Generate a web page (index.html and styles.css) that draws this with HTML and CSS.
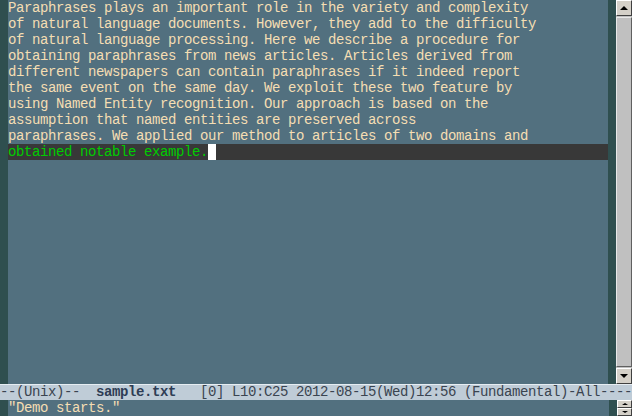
FILE: index.html
```html
<!DOCTYPE html>
<html>
<head>
<meta charset="utf-8">
<link rel="stylesheet" href="styles.css">
</head>
<body>
<div class="frame">
  <div class="window">
    <div class="fringe"></div>
    <div class="text">
<div class="line">Paraphrases plays an important role in the variety and complexity</div>
<div class="line">of natural language documents. However, they add to the difficulty</div>
<div class="line">of natural language processing. Here we describe a procedure for</div>
<div class="line">obtaining paraphrases from news articles. Articles derived from</div>
<div class="line">different newspapers can contain paraphrases if it indeed report</div>
<div class="line">the same event on the same day. We exploit these two feature by</div>
<div class="line">using Named Entity recognition. Our approach is based on the</div>
<div class="line">assumption that named entities are preserved across</div>
<div class="line">paraphrases. We applied our method to articles of two domains and</div>
<div class="line hl"><span class="green">obtained notable example.</span><span class="cursor"> </span></div>
    </div>
    <div class="fringe"></div>
    <div class="scrollbar">
      <div class="sbtn"><span class="tri up"></span></div>
      <div class="thumb"></div>
      <div class="sbtn"><span class="tri down"></span></div>
    </div>
  </div>
  <div class="modeline">--(Unix)--  <b class="buf">sample.txt</b>   [0] L10:C25 2012-08-15(Wed)12:56 (Fundamental)-All----</div>
  <div class="echo">
    <div class="fringe"></div>
    <div class="echotext">"Demo starts."</div>
    <div class="fringe"></div>
    <div class="mini">
      <div class="mbtn"><span class="mtri up"></span></div>
      <div class="mbtn"><span class="mtri down"></span></div>
    </div>
  </div>
</div>
</body>
</html>
```
FILE: styles.css
```css
html, body {
  margin: 0;
  padding: 0;
  background: #52707f;
}
.frame {
  width: 632px;
  height: 416px;
  display: flex;
  flex-direction: column;
  overflow: hidden;
  font-family: "Liberation Mono", "DejaVu Sans Mono", monospace;
  font-size: 14px;
  letter-spacing: -0.4px;
  line-height: 16px;
}
.window {
  height: 384px;
  display: flex;
}
.fringe {
  width: 8px;
  flex: none;
  background: #2f4f4f;
}
.text {
  width: 600px;
  color: #f5deb3;
}
.line {
  height: 16px;
  white-space: pre;
}
.hl {
  background: #383838;
}
.green {
  color: #00cc00;
}
.cursor {
  display: inline-block;
  width: 8px;
  height: 16px;
  background: #ffffff;
  vertical-align: top;
}
.scrollbar {
  width: 16px;
  flex: none;
  display: flex;
  flex-direction: column;
  background: #c0c0c0;
}
.sbtn {
  height: 16px;
  box-sizing: border-box;
  border-top: 1px solid #ffffff;
  border-left: 1px solid #ffffff;
  border-right: 1px solid #404040;
  border-bottom: 1px solid #404040;
  background: #d4d0c8;
  display: flex;
  align-items: center;
  justify-content: center;
}
.thumb {
  flex: 1;
  box-sizing: border-box;
  margin: 1px 0;
  border-top: 1px solid #e8e8e8;
  border-left: 1px solid #e8e8e8;
  border-right: 1px solid #606060;
  border-bottom: 1px solid #606060;
  background: #c0c0c0;
}
.tri {
  width: 0;
  height: 0;
  border-left: 4px solid transparent;
  border-right: 4px solid transparent;
}
.tri.up { border-bottom: 4px solid #000; }
.tri.down { border-top: 4px solid #000; }
.modeline {
  height: 16px;
  box-sizing: border-box;
  background: #bfccd7;
  border-top: 1px solid #e6edf2;
  color: #3a4450;
  white-space: pre;
  line-height: 15px;
}
.buf {
  color: #2e3d55;
  font-weight: bold;
}
.echo {
  height: 16px;
  display: flex;
}
.echotext {
  width: 601px;
  color: #f5deb3;
  white-space: pre;
}
.mini {
  width: 15px;
  flex: none;
  display: flex;
  flex-direction: column;
}
.mbtn {
  height: 8px;
  box-sizing: border-box;
  background: #d4d0c8;
  border-top: 1px solid #ffffff;
  border-left: 1px solid #ffffff;
  border-right: 1px solid #404040;
  border-bottom: 1px solid #404040;
  display: flex;
  align-items: center;
  justify-content: center;
}
.mtri {
  width: 0;
  height: 0;
  border-left: 3px solid transparent;
  border-right: 3px solid transparent;
}
.mtri.up { border-bottom: 2px solid #000; }
.mtri.down { border-top: 2px solid #000; }
```
